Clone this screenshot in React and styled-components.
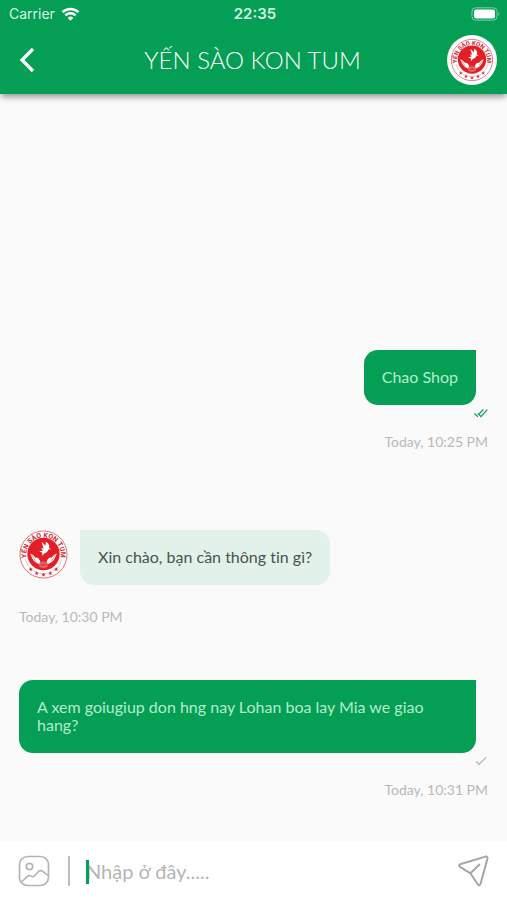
import React, { useId } from "react";
import styled, { createGlobalStyle, css } from "styled-components";

const GREEN = "#049e55";
const FONT = 'Lato, "Open Sans", sans-serif';

const GlobalStyle = createGlobalStyle`
  *, *::before, *::after { box-sizing: border-box; }
  body {
    margin: 0;
    background: #fafafa;
    font-family: ${FONT};
    font-variant-ligatures: none;
  }
`;

const Screen = styled.div`
  display: flex;
  flex-direction: column;
  min-height: 100vh;
`;

const Header = styled.header`
  position: relative;
  background: ${GREEN};
  color: #fff;
  box-shadow: 0 4px 6px -1px rgba(0, 0, 0, 0.4);
`;

const StatusBar = styled.div`
  display: grid;
  grid-template-columns: 1fr auto 1fr;
  align-items: center;
  height: 27px;
  padding: 0 6px 0 9px;
  font: 14px/18px Inter, sans-serif;
  color: #d9f5e4;
`;

const Carrier = styled.div`
  display: flex;
  align-items: center;
  gap: 6px;
`;

const Clock = styled.time`
  font-size: 15px;
  font-weight: 600;
`;

const BatteryIcon = styled.svg`
  justify-self: end;
`;

const TitleBar = styled.div`
  display: grid;
  grid-template-columns: 50px 1fr 50px;
  align-items: center;
  height: 67px;
  padding: 0 10px 2px 8px;
`;

const IconButton = styled.button`
  display: flex;
  align-items: center;
  justify-content: center;
  flex: none;
  padding: 0;
  border: 0;
  background: none;
  color: inherit;
  cursor: pointer;
`;

const BackButton = styled(IconButton)`
  width: 38px;
  height: 44px;
`;

const Title = styled.h1`
  margin: 0;
  font-size: 24px;
  line-height: 32px;
  font-weight: 300;
  text-align: center;
`;

const Messages = styled.main`
  flex: 1;
  display: flex;
  flex-direction: column;
  justify-content: flex-end;
  gap: 54px;
  padding: 42px 19px;
`;

const Message = styled.article`
  display: flex;
  flex-direction: column;
  align-items: ${(p) => (p.$sent ? "flex-end" : "flex-start")};
  margin-top: ${(p) => (p.$sent ? 0 : 25)}px;
`;

const BubbleRow = styled.div`
  display: flex;
  gap: 12px;
  padding-right: 12px;
`;

const AvatarSlot = styled.div`
  width: 49px;
`;

const Bubble = styled.p`
  margin: 0;
  padding: 18px 18px 19px;
  font-size: 16px;
  line-height: 18px;
  ${(p) =>
    p.$sent
      ? css`
          background: ${GREEN};
          color: #b5ecce;
          border-radius: 14px 0 14px 14px;
        `
      : css`
          background: #e2f1e9;
          color: #48544e;
          border-radius: 0 14px 14px 14px;
        `}
`;

const Receipt = styled.div`
  display: flex;
  align-items: center;
  height: 16px;
  color: ${(p) => (p.$read ? GREEN : "#b4b4b4")};
`;

const SentAt = styled.time`
  margin-top: ${(p) => (p.$sent ? 12 : 23)}px;
  font-size: 14px;
  line-height: 18px;
  color: #b9b9b9;
`;

const Composer = styled.form`
  display: flex;
  align-items: center;
  height: 59px;
  padding: 0 16px 0 18px;
  background: #fff;
  color: #b5b5b5;
`;

const Divider = styled.span`
  width: 2px;
  height: 30px;
  margin: 0 16px 0 18px;
  background: #bdbdbd;
`;

const Field = styled.div`
  position: relative;
  flex: 1;
  min-width: 0;
`;

const Caret = styled.span`
  position: absolute;
  left: 0;
  top: 5px;
  width: 3px;
  height: 24px;
  background: ${GREEN};
`;

const TextInput = styled.input`
  display: block;
  width: 100%;
  height: 32px;
  padding: 0;
  border: 0;
  outline: 0;
  background: none;
  font: 20px/24px ${FONT};
  color: #48544e;
  &::placeholder { color: #b5b5b5; opacity: 1; }
`;

function Logo({ size, frame }) {
  const id = useId();
  return (
    <svg width={size} height={size} viewBox="0 0 100 100" role="img" aria-label="Yến Sào Kon Tum">
      <defs>
        <path id={id} d="M17 62A35 35 0 1 1 83 62" />
      </defs>
      {frame && <circle cx="50" cy="50" r="50" fill="#fff" />}
      <g transform={frame ? "translate(7 7) scale(.86)" : undefined}>
        <circle cx="50" cy="50" r="48" fill="#fff" stroke="#d94a50" strokeWidth="1.6" />
        <path d="M13 60A38 38 0 0 0 87 60" fill="none" stroke="#e68b8e" strokeWidth="1.2" />
        <circle cx="50" cy="49" r="33" fill="#e31e26" />
        <text fill="#d3242d" fontFamily="Roboto, sans-serif" fontSize="14" fontWeight="700">
          <textPath href={`#${id}`} startOffset="50%" textAnchor="middle">YẾN SÀO KON TUM</textPath>
        </text>
        <path
          fill="#fff"
          d="M46 24l8 8 1-8c6 3 8 8 6 13l5 2-6 1c-1 5-5 7-9 8l-3 5-1-7-6-2 8-2-4-5 5 1zM23 48c6 2 8 6 11 9 3-2 7 1 9 6l1 7c-7-1-16-5-21-22zM77 48c-6 2-8 6-11 9-3-2-7 1-9 6l-1 7c7-1 16-5 21-22z"
        />
        <path d="M26 52l8 11M74 52l-8 11" stroke="#e31e26" strokeWidth="1" />
        <ellipse cx="50" cy="71" rx="9" ry="6" fill="#d94148" stroke="#ef8a8d" />
        <path d="M43 70q7-5 14 0M43 73q7 4 14 0" fill="none" stroke="#f3a6a8" />
        {[[24, 80], [36, 88], [50, 91], [64, 88], [76, 80]].map(([x, y]) => (
          <path
            key={x}
            transform={`translate(${x} ${y})`}
            fill="#d3242d"
            d="M0-4L1.2-1.2 4-1 1.8.9 2.5 4 0 2.3-2.5 4-1.8.9-4-1-1.2-1.2z"
          />
        ))}
      </g>
    </svg>
  );
}

const WifiIcon = () => (
  <svg width="19" height="14" viewBox="0 0 18 14" fill="none" stroke="#fff" strokeWidth="2.5" aria-hidden="true">
    <path d="M1 5.200a11.500 11.500 0 0 1 16 0M3.900 8.400a7.300 7.300 0 0 1 10.200 0" />
    <path d="M6.200 10.900a4 4 0 0 1 5.600 0L9 13.800z" fill="#fff" stroke="none" />
  </svg>
);

const Battery = () => (
  <BatteryIcon width="30" height="14" viewBox="0 0 30 14" aria-hidden="true">
    <rect x="1" y=".8" width="25" height="12.4" rx="3.6" fill="none" stroke="#7ed0a5" />
    <rect x="3" y="2.6" width="21" height="8.8" rx="2" fill="#fff" />
    <path d="M27.5 4.8q2 2.2 0 4.400z" fill="#7ed0a5" />
  </BatteryIcon>
);

const BackIcon = () => (
  <svg width="16" height="26" viewBox="0 0 16 26" fill="none" stroke="#fff" strokeWidth="3.2" aria-hidden="true">
    <path d="M14 2L3 13l11 11" />
  </svg>
);

const CheckIcon = ({ double }) => (
  <svg width="14" height="12" viewBox="0 0 14 12" fill="none" stroke="currentColor" strokeWidth="1.2" aria-hidden="true">
    {double ? (
      <path d="M.5 6.5l3.300 3.200M3.800 6.400L7 9.700l6.300-7M5 7.200l4.400-4.700" />
    ) : (
      <path d="M2 6.500l3 3L12 2.400" />
    )}
  </svg>
);

const PictureIcon = () => (
  <svg width="32" height="32" viewBox="0 0 32 32" fill="none" stroke="currentColor" strokeWidth="1.7" aria-hidden="true">
    <rect x="1.500" y="1.500" width="29" height="29" rx="8" />
    <circle cx="11.500" cy="11.500" r="3.200" />
    <path d="M3.500 27l6-5.700q1.600-1.300 3.300-.4 2.500 1.600 4.300-.7l3.400-3.700q2.300-2 4.600.1l5 3.800" />
  </svg>
);

const SendIcon = () => (
  <svg width="34" height="34" viewBox="0 0 34 34" fill="none" stroke="#a5a5a5" strokeWidth="2" strokeLinejoin="round" strokeLinecap="round" aria-hidden="true">
    <path d="M3.200 10.300L28.500 2.600q2.300-.4 2 1.900L23.500 30q-1.200 2.200-2.800.3l-7.300-11L3 12.800q-1.600-1.500.2-2.500zM13.400 19.300l9-8.800" />
  </svg>
);

const MESSAGES = [
  { id: 1, sent: true, read: true, text: "Chao Shop", time: "Today, 10:25 PM" },
  { id: 2, sent: false, text: "Xin chào, bạn cần thông tin gì?", time: "Today, 10:30 PM" },
  { id: 3, sent: true, read: false, text: "A xem goiugiup don hng nay Lohan boa lay Mia we giao hang?", time: "Today, 10:31 PM" },
];

export default function App() {
  return (
    <Screen>
      <GlobalStyle />
      <Header>
        <StatusBar>
          <Carrier>Carrier <WifiIcon /></Carrier>
          <Clock>22:35</Clock>
          <Battery />
        </StatusBar>
        <TitleBar>
          <BackButton type="button" aria-label="Back"><BackIcon /></BackButton>
          <Title>YẾN SÀO KON TUM</Title>
          <Logo size={50} frame />
        </TitleBar>
      </Header>
      <Messages>
        {MESSAGES.map((m) => (
          <Message key={m.id} $sent={m.sent}>
            <BubbleRow>
              {!m.sent && <AvatarSlot><Logo size={49} /></AvatarSlot>}
              <Bubble $sent={m.sent}>{m.text}</Bubble>
            </BubbleRow>
            {m.sent && <Receipt $read={m.read}><CheckIcon double={m.read} /></Receipt>}
            <SentAt $sent={m.sent}>{m.time}</SentAt>
          </Message>
        ))}
      </Messages>
      <Composer onSubmit={(e) => e.preventDefault()}>
        <IconButton type="button" aria-label="Attach a picture"><PictureIcon /></IconButton>
        <Divider />
        <Field>
          <TextInput aria-label="Nhập ở đây" placeholder="Nhập ở đây....." />
          <Caret />
        </Field>
        <IconButton type="submit" aria-label="Send"><SendIcon /></IconButton>
      </Composer>
    </Screen>
  );
}
